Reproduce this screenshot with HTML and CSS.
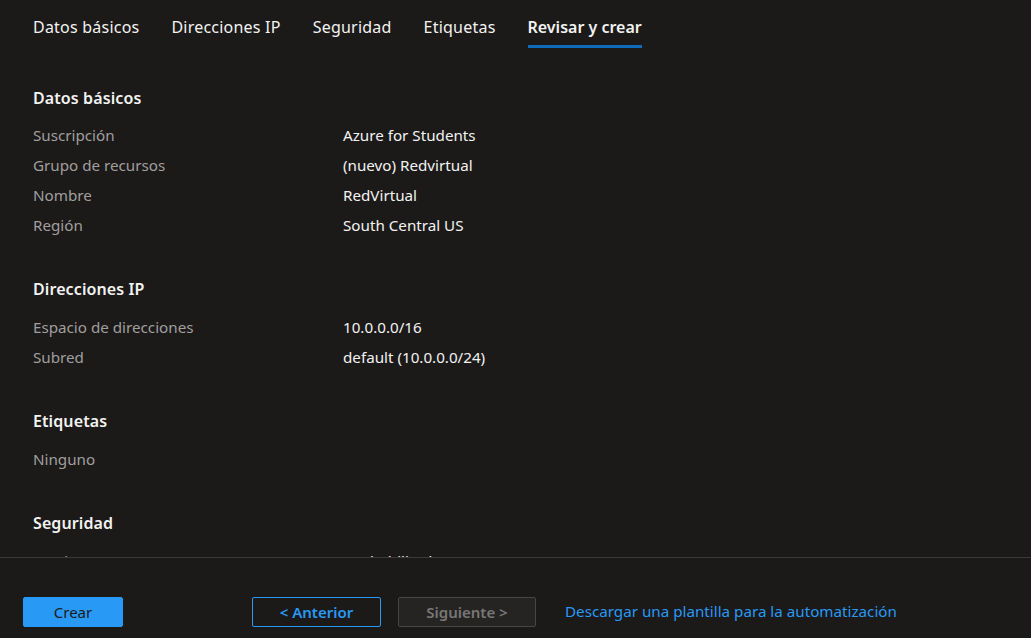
FILE: index.html
```html
<!DOCTYPE html>
<html lang="es">
<head>
<meta charset="utf-8">
<title>Revisar y crear</title>
<link rel="stylesheet" href="styles.css">
</head>
<body>
<div class="page">
  <nav class="tabs">
    <span class="tab">Datos básicos</span>
    <span class="tab">Direcciones IP</span>
    <span class="tab">Seguridad</span>
    <span class="tab">Etiquetas</span>
    <span class="tab active">Revisar y crear</span>
  </nav>
  <main class="content">
    <section class="section first">
      <h2 class="heading">Datos básicos</h2>
      <div class="row"><span class="label">Suscripción</span><span class="value">Azure for Students</span></div>
      <div class="row"><span class="label">Grupo de recursos</span><span class="value">(nuevo) Redvirtual</span></div>
      <div class="row"><span class="label">Nombre</span><span class="value">RedVirtual</span></div>
      <div class="row"><span class="label">Región</span><span class="value">South Central US</span></div>
    </section>
    <section class="section">
      <h2 class="heading">Direcciones IP</h2>
      <div class="row"><span class="label">Espacio de direcciones</span><span class="value">10.0.0.0/16</span></div>
      <div class="row"><span class="label">Subred</span><span class="value">default (10.0.0.0/24)</span></div>
    </section>
    <section class="section">
      <h2 class="heading">Etiquetas</h2>
      <div class="row"><span class="label">Ninguno</span></div>
    </section>
    <section class="section">
      <h2 class="heading">Seguridad</h2>
      <div class="row"><span class="label">Bastion Host</span><span class="value">Deshabilitado</span></div>
    </section>
  </main>
  <footer class="footer">
    <button class="btn btn-primary">Crear</button>
    <button class="btn btn-outline">&lt; Anterior</button>
    <button class="btn btn-disabled" disabled>Siguiente &gt;</button>
    <a class="link" href="#">Descargar una plantilla para la automatización</a>
  </footer>
</div>
</body>
</html>
```

FILE: styles.css
```css
html, body {
  margin: 0;
  padding: 0;
  background: #1b1a19;
}
body {
  font-family: "Noto Sans", "Open Sans", sans-serif;
  color: #f3f2f1;
}
.page {
  width: 1031px;
  height: 638px;
  display: flex;
  flex-direction: column;
  overflow: hidden;
}
.tabs {
  display: flex;
  gap: 32px;
  padding: 0 33px;
  height: 48px;
  flex: none;
}
.tab {
  font-size: 16px;
  letter-spacing: 0.22px;
  line-height: 22px;
  padding-top: 16px;
  height: 29px;
  color: #f3f2f1;
  white-space: nowrap;
  border-bottom: 3px solid transparent;
}
.tab.active {
  font-weight: 600;
  letter-spacing: 0;
  border-bottom-color: #0f6cbd;
}
.content {
  flex: 1;
  overflow: hidden;
  padding: 1px 33px 0;
  border-bottom: 1px solid #3b3a39;
}
.section {
  margin-top: 38px;
}
.heading {
  margin: 0 0 12px;
  font-size: 16px;
  letter-spacing: 0.1px;
  line-height: 22px;
  font-weight: 600;
  color: #f3f2f1;
}
.section.first .heading {
  margin-bottom: 11px;
}
.row {
  display: flex;
  height: 30px;
  line-height: 30px;
  font-size: 15.2px;
}
.label {
  width: 310px;
  color: #a19f9d;
}
.value {
  color: #f3f2f1;
}
.footer {
  flex: none;
  height: 80px;
  box-sizing: border-box;
  padding: 39px 0 0 23px;
  display: flex;
  align-items: flex-start;
}
.btn {
  font-family: inherit;
  height: 30px;
  box-sizing: border-box;
  font-size: 15px;
  line-height: 26px;
  border-radius: 2px;
  padding: 0 0 1px;
  cursor: pointer;
}
.btn-primary {
  width: 100px;
  background: #2899f5;
  border: 1px solid #2899f5;
  color: #1b1a19;
  margin-right: 129px;
}
.btn-outline {
  width: 129px;
  background: transparent;
  border: 1px solid #2899f5;
  color: #2899f5;
  font-weight: 600;
  margin-right: 17px;
}
.btn-disabled {
  width: 138px;
  background: #252423;
  border: 1px solid #484644;
  color: #797775;
  font-weight: 600;
  margin-right: 29px;
}
.link {
  font-size: 15.2px;
  line-height: 29px;
  color: #2899f5;
  text-decoration: none;
  white-space: nowrap;
}
```
